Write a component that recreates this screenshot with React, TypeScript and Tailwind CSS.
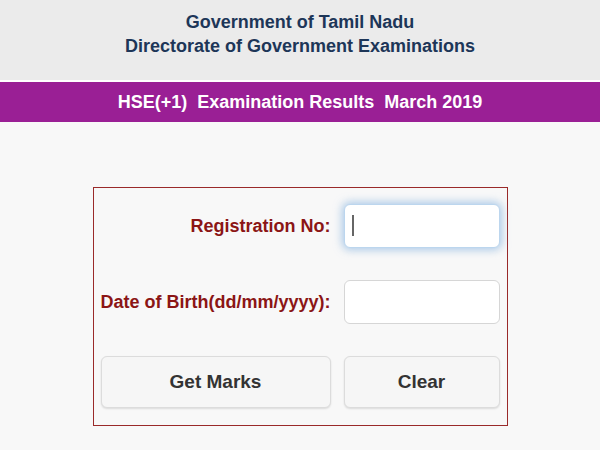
import React, { useEffect, useRef } from 'react';

export default function App() {
  const regRef = useRef<HTMLInputElement>(null);

  useEffect(() => {
    regRef.current?.focus();
  }, []);

  return (
    <div className="min-h-[450px] w-[600px] bg-[#f8f8f8] font-['Liberation_Sans',Arial,sans-serif]">
      {/* Header */}
      <div className="flex h-[80px] flex-col items-center bg-[#ebebeb] pt-[10px] text-[18px] font-bold leading-[24px] text-[#1d3658]">
        <div>Government of Tamil Nadu</div>
        <div>Directorate of Government Examinations</div>
      </div>
      <div className="h-[2px] bg-white" />
      <div className="flex h-[40px] items-center justify-center bg-[#9a1f95] text-[18px] font-bold whitespace-pre text-white">
        HSE(+1)  Examination Results  March 2019
      </div>

      {/* Form */}
      <div className="flex justify-center pt-[65px]">
        <div className="border border-[#9a2a2a] px-[7px] pt-[16px] pb-[17px]">
          <div className="grid grid-cols-[230px_156px] gap-x-[13px] gap-y-[32px]">
            <label className="flex items-center justify-end whitespace-nowrap text-[18px] font-bold text-[#8b1515]">
              Registration No:
            </label>
            <div className="relative">
              <input
                ref={regRef}
                className="h-[44px] w-full rounded-[6px] border border-[#bcd6ee] bg-white px-[8px] text-[16px] text-[#333] caret-transparent shadow-[0_0_8px_2px_rgba(120,170,220,0.6)] outline-none"
              />
              {/* text caret */}
              <span className="pointer-events-none absolute top-[11px] left-[8px] h-[21px] w-[2px] bg-[#666]" />
            </div>
            <label className="flex items-center justify-end whitespace-nowrap text-[18px] font-bold text-[#8b1515]">
              Date of Birth(dd/mm/yyyy):
            </label>
            <input className="h-[44px] rounded-[6px] border border-[#d6d6d6] bg-white px-[8px] text-[16px] text-[#333] outline-none" />
            <button className="h-[52px] rounded-[6px] border border-[#dcdcdc] bg-[#f6f6f6] text-[19px] font-bold text-[#333] shadow-[0_1px_2px_rgba(0,0,0,0.12)]">
              Get Marks
            </button>
            <button className="h-[52px] rounded-[6px] border border-[#dcdcdc] bg-[#f6f6f6] text-[19px] font-bold text-[#333] shadow-[0_1px_2px_rgba(0,0,0,0.12)]">
              Clear
            </button>
          </div>
        </div>
      </div>
    </div>
  );
}
